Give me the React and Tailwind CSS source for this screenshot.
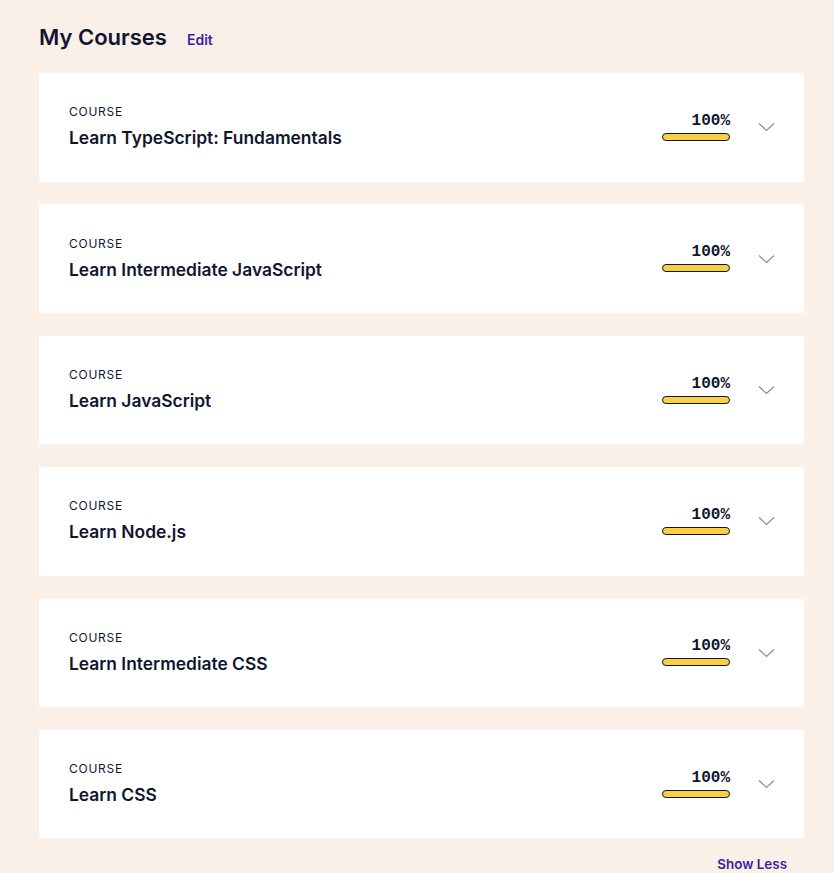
import React from 'react';

const courses = [
  'Learn TypeScript: Fundamentals',
  'Learn Intermediate JavaScript',
  'Learn JavaScript',
  'Learn Node.js',
  'Learn Intermediate CSS',
  'Learn CSS',
];

const Chevron = () => (
  <svg width="17" height="10" viewBox="0 0 17 10" fill="none" className="shrink-0">
    <path d="M1 1.5 L8.5 8.5 L16 1.5" stroke="#8a8d98" strokeWidth="1.2" />
  </svg>
);

const CourseCard = ({ title }) => (
  <div className="bg-white h-[108.5px] flex items-center justify-between pl-[30px] pr-[29px]">
    <div className="flex flex-col">
      <span className="text-[12px] leading-[14px] tracking-[0.06em] text-[#10162f]">COURSE</span>
      <span className="mt-[8px] text-[17.4px] leading-[22px] font-semibold text-[#10162f]">{title}</span>
    </div>
    <div className="flex items-center gap-[28px]">
      <div className="flex flex-col items-end w-[68px] -mt-[2px]">
        <span className="font-['Liberation_Mono',monospace] font-bold text-[16px] leading-[18px] text-[#10162f]">100%</span>
        <div className="mt-[3px] w-[68px] h-[8px] rounded-full bg-[#f9d03f] border border-[#10162f]"></div>
      </div>
      <Chevron />
    </div>
  </div>
);

export default function App() {
  return (
    <div className="min-h-screen bg-[#faf0e7] pl-[39px] pr-[30px] pt-[23px] pb-[4px] font-['Inter',sans-serif] text-[#10162f]">
      <div className="flex items-baseline gap-[20px]">
        <h1 className="text-[22px] leading-[28px] font-semibold">My Courses</h1>
        <span className="text-[14px] font-semibold text-[#3a1fa6]">Edit</span>
      </div>
      <div className="mt-[22px] flex flex-col gap-[22.9px]">
        {courses.map((c) => (
          <CourseCard key={c} title={c} />
        ))}
      </div>
      <div className="flex justify-end mr-[17px] mt-[16px]">
        <span className="text-[13.4px] font-semibold text-[#3a1fa6]">Show Less</span>
      </div>
    </div>
  );
}
